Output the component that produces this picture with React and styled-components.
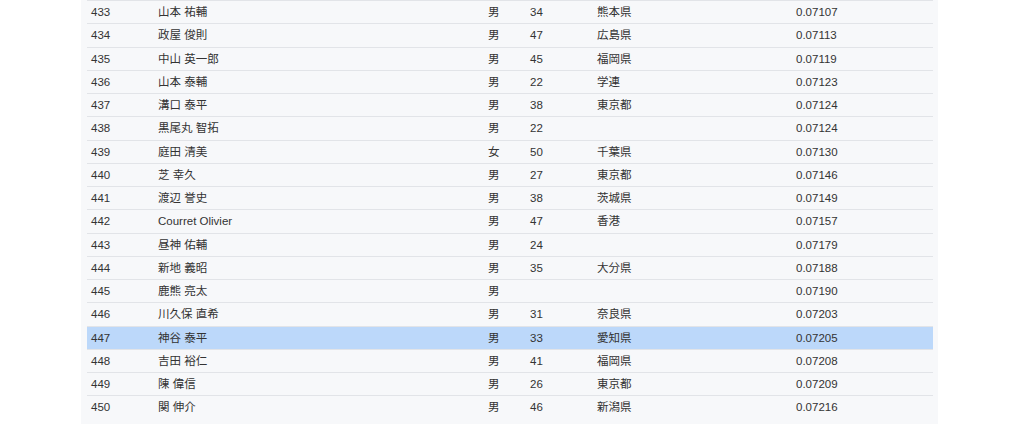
import React from "react";
import styled, { createGlobalStyle } from "styled-components";

const Global = createGlobalStyle`
  html, body {
    margin: 0;
    padding: 0;
    background: #ffffff;
  }
  body {
    font-family: "Liberation Sans", "Noto Sans CJK JP", Arial, sans-serif;
  }
`;

const Page = styled.div`
  display: flex;
  justify-content: flex-start;
  padding-left: 81px;
  height: 424px;
  overflow: hidden;
`;

const Panel = styled.div`
  width: 857px;
  box-sizing: border-box;
  background: #f7f8fa;
  padding: 0 5px 4px 6px;
  height: 424px;
`;

const Table = styled.div`
  display: flex;
  flex-direction: column;
  border-top: 1px solid #e2e4e8;
`;

const cols = "67px 330px 42px 67px 199px 141px";

const Row = styled.div`
  display: grid;
  grid-template-columns: ${cols};
  height: 22.25px;
  border-bottom: 1px solid #e2e4e8;
  background: ${(p) => (p.$active ? "#bcd8fa" : "transparent")};
  box-sizing: content-box;

  &:last-child {
    border-bottom-color: transparent;
  }
`;

const Cell = styled.div`
  padding: 1px 0 0 4px;
  line-height: 21.25px;
  font-size: 11.5px;
  color: #333333;
  white-space: nowrap;
  overflow: hidden;
  font-family: "Liberation Sans", "Noto Sans CJK JP", Arial, sans-serif;
`;

const rows = [
  ["433", "山本 祐輔", "男", "34", "熊本県", "0.07107"],
  ["434", "政屋 俊則", "男", "47", "広島県", "0.07113"],
  ["435", "中山 英一郎", "男", "45", "福岡県", "0.07119"],
  ["436", "山本 泰輔", "男", "22", "学連", "0.07123"],
  ["437", "溝口 泰平", "男", "38", "東京都", "0.07124"],
  ["438", "黒尾丸 智拓", "男", "22", "", "0.07124"],
  ["439", "庭田 清美", "女", "50", "千葉県", "0.07130"],
  ["440", "芝 幸久", "男", "27", "東京都", "0.07146"],
  ["441", "渡辺 誉史", "男", "38", "茨城県", "0.07149"],
  ["442", "Courret Olivier", "男", "47", "香港", "0.07157"],
  ["443", "昼神 佑輔", "男", "24", "", "0.07179"],
  ["444", "新地 義昭", "男", "35", "大分県", "0.07188"],
  ["445", "鹿熊 亮太", "男", "", "", "0.07190"],
  ["446", "川久保 直希", "男", "31", "奈良県", "0.07203"],
  ["447", "神谷 泰平", "男", "33", "愛知県", "0.07205"],
  ["448", "吉田 裕仁", "男", "41", "福岡県", "0.07208"],
  ["449", "陳 偉信", "男", "26", "東京都", "0.07209"],
  ["450", "関 伸介", "男", "46", "新潟県", "0.07216"],
];

export default function App() {
  return (
    <>
      <Global />
      <Page>
        <Panel>
          <Table>
            {rows.map((r) => (
              <Row key={r[0]} $active={r[0] === "447"}>
                {r.map((c, i) => (
                  <Cell key={i}>{c}</Cell>
                ))}
              </Row>
            ))}
          </Table>
        </Panel>
      </Page>
    </>
  );
}
